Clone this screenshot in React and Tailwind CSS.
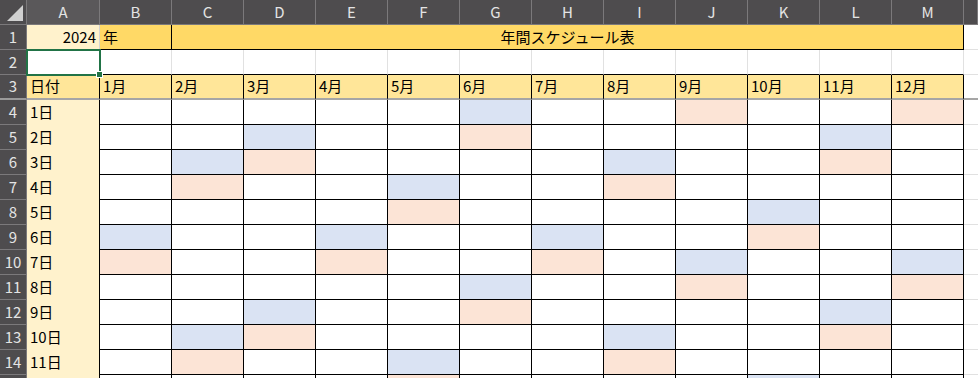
import React from 'react';

const COLS = ['A', 'B', 'C', 'D', 'E', 'F', 'G', 'H', 'I', 'J', 'K', 'L', 'M'];
const MONTHS = ['1月', '2月', '3月', '4月', '5月', '6月', '7月', '8月', '9月', '10月', '11月', '12月'];

// weekly pattern for B..M: b = blue, p = peach
const PATTERN = [
  '.....b..p..p',
  '..b..p....b.',
  '.bp....b..p.',
  '.p..b..p....',
  '....p....b..',
  'b..b..b..p..',
  'p..p..p.b..b',
];

const font = { fontFamily: '"Noto Sans CJK JP", "Noto Sans", sans-serif' };

const HeadCell = ({ children, sel }) => (
  <div
    className={`flex items-center justify-center border-r border-b border-[#7b797b] text-[15px] text-[#e4e4e4] ${sel ? 'bg-[#5a585a]' : 'bg-[#4e4c4e]'}`}
  >
    {children}
  </div>
);

const RowNum = ({ n, freeze }) => (
  <div
    className={`flex items-center justify-center border-r border-[#7b797b] bg-[#4e4c4e] text-[15px] text-[#e4e4e4] ${freeze ? 'border-b-2 border-b-[#9a9a9a]' : 'border-b border-b-[#7b797b]'}`}
  >
    {n}
  </div>
);

const DayRow = ({ day }) => {
  const pat = PATTERN[(day - 1) % 7];
  return (
    <>
      <RowNum n={day + 3} />
      <div className="flex items-center border-r border-black bg-[#fff2cc] pl-[3px] text-[15px] text-black">
        {day}日
      </div>
      {pat.split('').map((c, i) => (
        <div
          key={i}
          className={`border-r border-b border-black ${c === 'b' ? 'bg-[#dae3f3]' : c === 'p' ? 'bg-[#fce4d6]' : 'bg-white'}`}
        />
      ))}
      <div className="border-b border-[#e1e1e1] bg-white" />
    </>
  );
};

export default function App() {
  const days = Array.from({ length: 12 }, (_, i) => i + 1);
  return (
    <div className="h-[378px] w-[978px] overflow-hidden bg-white" style={font}>
      <div className="grid grid-cols-[27px_73px_repeat(12,72px)_1fr] auto-rows-[25px]">
        {/* column headers */}
        <div className="relative border-r border-b border-[#7b797b] bg-[#4e4c4e]">
          <svg className="absolute left-[7px] top-[5px]" width="16" height="16" viewBox="0 0 16 16">
            <polygon points="16,0 16,16 0,16" fill="#d0d0d0" />
          </svg>
        </div>
        {COLS.map((c) => (
          <HeadCell key={c} sel={c === 'A'}>{c}</HeadCell>
        ))}
        <HeadCell />

        {/* row 1 */}
        <RowNum n={1} />
        <div className="flex items-center justify-end border-r border-[#d4d4d4] bg-[#fff2cc] pr-[3px] text-[15px] text-black">
          2024
        </div>
        <div className="flex items-center border-r border-b border-black bg-[#ffd966] pl-[3px] text-[15px] text-black">
          年
        </div>
        <div className="col-span-11 flex items-center justify-center border-r border-b border-black bg-[#ffd966] text-[15px] text-black">
          年間スケジュール表
        </div>
        <div className="border-b border-[#e1e1e1] bg-white" />

        {/* row 2 */}
        <RowNum n={2} />
        <div className="relative bg-white">
          <div className="absolute -left-[1px] -top-[1px] h-[27px] w-[75px] border-2 border-[#217346]" />
          <div className="absolute -bottom-[3px] -right-[3px] z-10 h-[7px] w-[7px] border border-white bg-[#217346]" />
        </div>
        {MONTHS.map((m) => (
          <div key={m} className="border-r border-b border-b-black border-r-[#e1e1e1] bg-white" />
        ))}
        <div className="border-b border-[#e1e1e1] bg-white" />

        {/* row 3 */}
        <RowNum n={3} freeze />
        <div className="flex items-center border-r border-b-2 border-r-black border-b-[#a6a6a6] bg-[#ffe699] pl-[3px] text-[15px] text-black">
          日付
        </div>
        {MONTHS.map((m) => (
          <div
            key={m}
            className="flex items-center border-r border-b-2 border-r-black border-b-[#a6a6a6] bg-[#ffe699] pl-[3px] text-[15px] text-black"
          >
            {m}
          </div>
        ))}
        <div className="border-b-2 border-[#a6a6a6] bg-white" />

        {days.map((d) => (
          <DayRow key={d} day={d} />
        ))}
      </div>
    </div>
  );
}
